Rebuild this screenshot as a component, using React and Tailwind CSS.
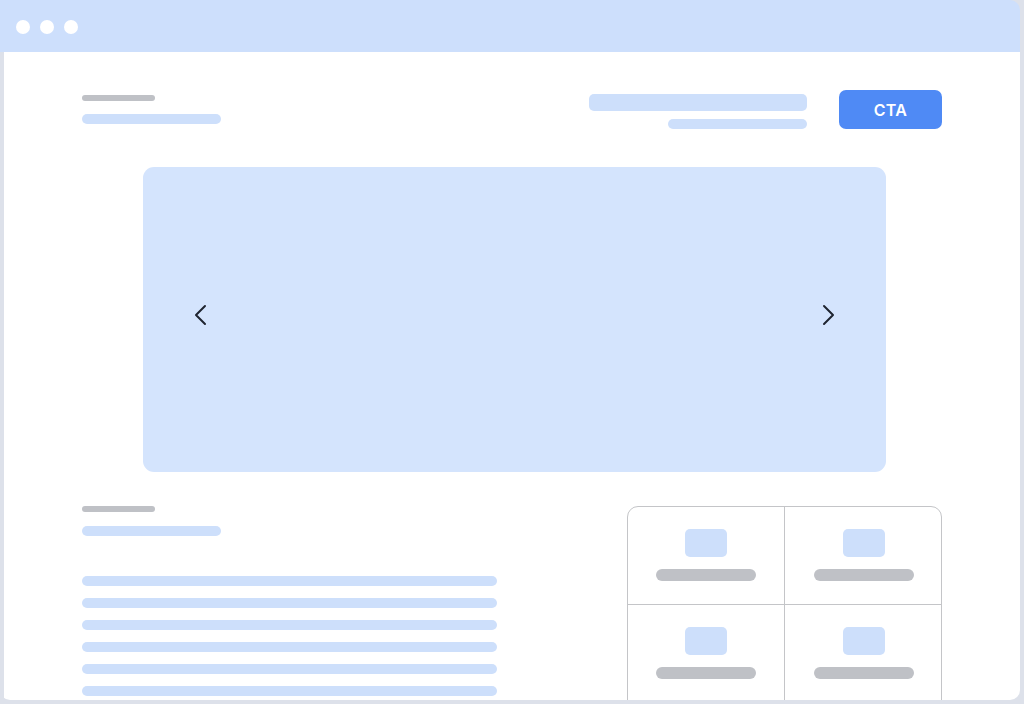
import React from "react";

const Bar = ({ className }) => <div className={`rounded-full ${className}`} />;

const Chevron = ({ dir }) => (
  <svg
    width="24"
    height="24"
    viewBox="0 0 24 24"
    fill="none"
    stroke="#1f2430"
    strokeWidth={2}
    strokeLinecap="round"
    strokeLinejoin="round"
  >
    <path d={dir === "left" ? "M16 3 L7 12 L16 21" : "M8 3 L17 12 L8 21"} />
  </svg>
);

const Cell = ({ className }) => (
  <div className={`flex flex-col items-center pt-[22px] ${className}`}>
    <div className="w-[42px] h-[28px] rounded-[5px] bg-[#cddffb]" />
    <div className="mt-[12px] w-[100px] h-[12px] rounded-full bg-[#bfc1c6]" />
  </div>
);

export default function App() {
  return (
    <div className="w-[1024px] h-[704px] bg-[#dde1ea] overflow-hidden font-['Inter',sans-serif]">
      <div className="w-[1020px] h-[700px] rounded-tr-[10px] rounded-b-[10px] overflow-hidden flex flex-col">
        {/* title bar */}
        <div className="h-[52px] shrink-0 bg-[#cddffc] flex items-center gap-[10px] pl-[16px] pt-[2px]">
          <div className="w-[14px] h-[14px] rounded-full bg-white" />
          <div className="w-[14px] h-[14px] rounded-full bg-white" />
          <div className="w-[14px] h-[14px] rounded-full bg-white" />
        </div>

        {/* page */}
        <div className="flex-1 ml-[4px] bg-white px-[78px] pt-[38px] flex flex-col">
          {/* header */}
          <div className="flex items-start justify-between h-[39px]">
            <div className="flex flex-col pt-[5px]">
              <Bar className="w-[73px] h-[6px] bg-[#bfc1c6]" />
              <Bar className="mt-[13px] w-[139px] h-[10px] bg-[#cddffb]" />
            </div>
            <div className="flex items-start">
              <div className="flex flex-col items-end pt-[4px]">
                <div className="w-[218px] h-[17px] rounded-[5px] bg-[#cddffb]" />
                <Bar className="mt-[8px] w-[139px] h-[10px] bg-[#cddffb]" />
              </div>
              <button className="ml-[32px] w-[103px] h-[39px] rounded-[7px] bg-[#4f8af5] text-white text-[16px] font-semibold tracking-[0.3px] flex items-center justify-center">
                CTA
              </button>
            </div>
          </div>

          {/* hero */}
          <div className="mt-[38px] ml-[61px] w-[743px] h-[305px] shrink-0 rounded-[11px] bg-[#d4e4fd] flex items-center justify-between px-[46px] pb-[9px]">
            <Chevron dir="left" />
            <Chevron dir="right" />
          </div>

          {/* bottom */}
          <div className="mt-[34px] flex justify-between items-start">
            <div className="flex flex-col w-[415px]">
              <Bar className="w-[73px] h-[6px] bg-[#bfc1c6]" />
              <Bar className="mt-[14px] w-[139px] h-[10px] bg-[#cddffb]" />
              <div className="mt-[40px] flex flex-col gap-[12px]">
                {[0, 1, 2, 3, 4, 5].map((i) => (
                  <Bar key={i} className="w-[415px] h-[10px] bg-[#cddffb]" />
                ))}
              </div>
            </div>
            <div className="w-[315px] h-[240px] rounded-[11px] border border-[#c4c5c8] grid grid-cols-[157px_157px] grid-rows-[98px_98px_1fr] overflow-hidden">
              <Cell className="border-r border-b border-[#c4c5c8]" />
              <Cell className="border-b border-[#c4c5c8]" />
              <Cell className="border-r border-[#c4c5c8]" />
              <Cell className="" />
              <div className="border-r border-[#c4c5c8]" />
              <div />
            </div>
          </div>
        </div>
      </div>
    </div>
  );
}
